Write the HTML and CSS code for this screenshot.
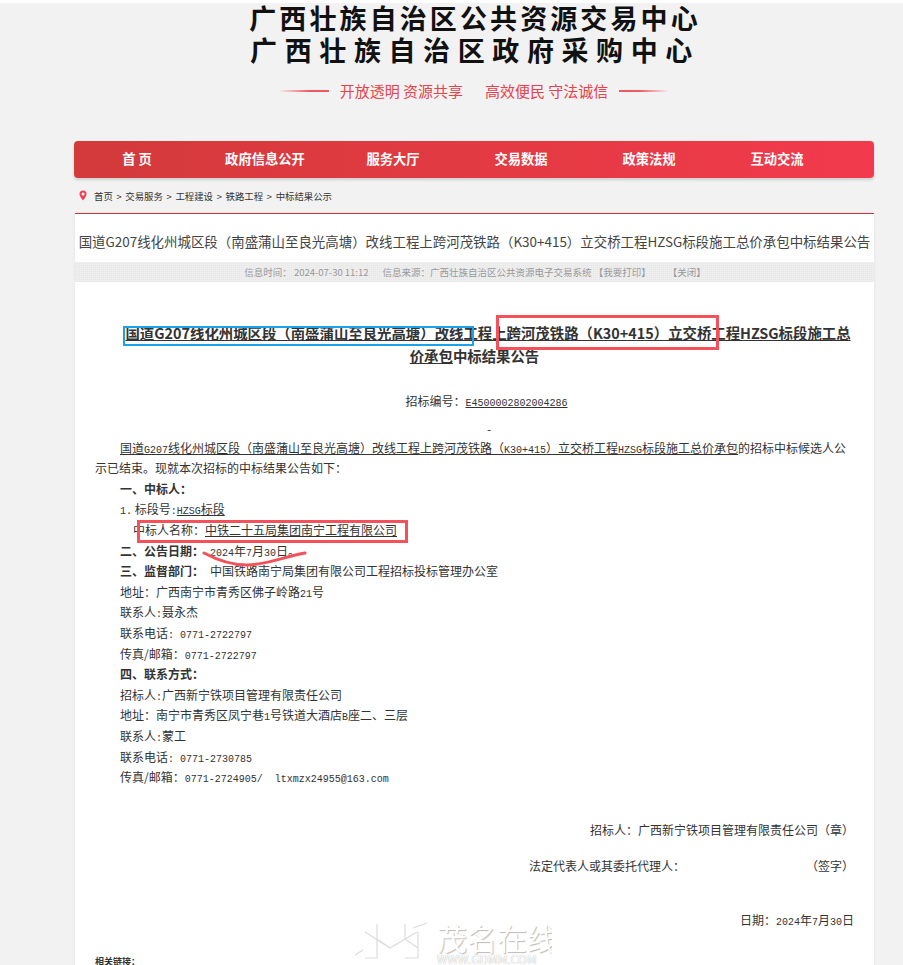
FILE: index.html
```html
<!DOCTYPE html>
<html lang="en">
<head>
    <meta charset="UTF-8">
    <meta name="viewport" content="width=device-width, initial-scale=1.0">
    <link rel="stylesheet" href="styles.css">
    <title>中标结果公示</title>
</head>
<body>
    <header class="site-header">
        <h1 class="site-title">广西壮族自治区公共资源交易中心</h1>
        <h1 class="site-title site-title-wide">广西壮族自治区政府采购中心</h1>
        <div class="slogan">
            <span class="slogan-line slogan-line-left"></span>
            <span>开放透明 资源共享</span>
            <span>高效便民 守法诚信</span>
            <span class="slogan-line slogan-line-right"></span>
        </div>
    </header>

    <nav class="main-nav">
        <a>首 页</a>
        <a>政府信息公开</a>
        <a>服务大厅</a>
        <a>交易数据</a>
        <a>政策法规</a>
        <a>互动交流</a>
    </nav>

    <div class="breadcrumb">
        <svg class="pin" width="8" height="11" viewBox="0 0 8 11">
            <path d="M4 0.5a3.5 3.5 0 0 0-3.5 3.5c0 2.4 3.5 6.5 3.5 6.5s3.5-4.1 3.5-6.5a3.5 3.5 0 0 0-3.5-3.5z" fill="#ee4050"/>
            <circle cx="4" cy="4" r="1.5" fill="#fff"/>
        </svg>
        <span>首页 &gt; 交易服务 &gt; 工程建设 &gt; 铁路工程 &gt; 中标结果公示</span>
    </div>

    <main class="panel">
        <h2 class="page-title">国道G207线化州城区段（南盛蒲山至良光高塘）改线工程上跨河茂铁路（K30+415）立交桥工程HZSG标段施工总价承包中标结果公告</h2>
        <div class="info-bar">
            <span>信息时间：&nbsp;2024-07-30 11:12</span>
            <span>信息来源：广西壮族自治区公共资源电子交易系统 【我要打印】</span>
            <span>【关闭】</span>
        </div>

        <article class="notice">
            <h3 class="notice-title"><u>国道G207线化州城区段（南盛蒲山至良光高塘）改线工程上跨河茂铁路（K30+415）立交桥工程HZSG标段施工总价承包</u>中标结果公告</h3>
            <p class="bid-no">招标编号：<u class="num">E4500002802004286</u></p>
            <p class="dash">-</p>
            <p class="lead"><u>国道<span class="num">G207</span>线化州城区段（南盛蒲山至良光高塘）改线工程上跨河茂铁路（<span class="num">K30+415</span>）立交桥工程<span class="num">HZSG</span>标段施工总价承包</u>的招标中标候选人公示已结束。现就本次招标的中标结果公告如下：</p>
            <p class="item"><b>一、中标人：</b></p>
            <p class="item"><span class="num">1.</span> 标段号<span class="num">:</span><u><span class="num">HZSG</span>标段</u></p>
            <p class="item item-name">中标人名称：<u>中铁二十五局集团南宁工程有限公司</u></p>
            <p class="item"><b>二、公告日期：</b><span class="num">2024</span>年<span class="num">7</span>月<span class="num">30</span>日。</p>
            <p class="item"><b>三、监督部门：</b>中国铁路南宁局集团有限公司工程招标投标管理办公室</p>
            <p class="item">地址：广西南宁市青秀区佛子岭路<span class="num">21</span>号</p>
            <p class="item">联系人<span class="num">:</span>聂永杰</p>
            <p class="item">联系电话<span class="num">: 0771-2722797</span></p>
            <p class="item">传真/邮箱：<span class="num">0771-2722797</span></p>
            <p class="item"><b>四、联系方式：</b></p>
            <p class="item">招标人<span class="num">:</span>广西新宁铁项目管理有限责任公司</p>
            <p class="item">地址：南宁市青秀区凤宁巷<span class="num">1</span>号铁道大酒店<span class="num">B</span>座二、三层</p>
            <p class="item">联系人<span class="num">:</span>蒙工</p>
            <p class="item">联系电话<span class="num">: 0771-2730785</span></p>
            <p class="item">传真/邮箱：<span class="num">0771-2724905/&nbsp;&nbsp;ltxmzx24955@163.com</span></p>

            <p class="sign sign-company">招标人：广西新宁铁项目管理有限责任公司（章）</p>
            <p class="sign sign-agent"><span>法定代表人或其委托代理人：</span><span>（签字）</span></p>
            <p class="sign sign-date">日期：<span class="num">2024</span>年<span class="num">7</span>月<span class="num">30</span>日</p>
            <p class="related">相关链接：</p>
        </article>
    </main>

    <!-- image watermark over the page -->
    <svg class="watermark-logo" width="78" height="50" viewBox="0 0 78 50">
        <path d="M22 9V43H10M50 9V24M63 17V43H50M10 17L35 33L62 17M22 24L35 33M50 24L63 33M58 13L72 8M0 40L8 35" fill="none" stroke="#dcdcdc" stroke-width="1.2"/>
    </svg>
    <div class="watermark-text">
        <span class="watermark-name">茂名在线</span>
        <span class="watermark-url">WWW.GDMM.COM</span>
    </div>

    <!-- hand marks drawn on the screenshot -->
    <div class="mark mark-blue"></div>
    <div class="mark mark-red mark-route"></div>
    <div class="mark mark-red mark-winner"></div>
    <svg class="mark-curve" width="110" height="20" viewBox="0 0 110 20">
        <path d="M3 5C18 13 32 17 46 17C66 17 85 8 104 5" fill="none" stroke="#f4515a" stroke-width="3" stroke-linecap="round"/>
    </svg>
</body>
</html>
```

FILE: styles.css
```css
html, body {
    height: 965px;
    overflow: hidden;
}

body {
    margin: 0;
    position: relative;
    background-color: #f2f2f2;
    border-top: 3px solid #fff;
    box-sizing: border-box;
    font-family: "Noto Sans CJK SC", "Liberation Sans", sans-serif;
    font-size: 12px;
    color: #333;
}

h1, h2, h3, p {
    margin: 0;
    font-weight: normal;
}

/* Header */
.site-header {
    height: 138px;
    text-align: center;
}

.site-title {
    height: 32px;
    margin-left: 47px;
    font-size: 27px;
    font-weight: 700;
    line-height: 30px;
    letter-spacing: 3.1px;
    color: #111;
}

.site-title-wide {
    letter-spacing: 7.6px;
}

.slogan {
    display: flex;
    justify-content: center;
    align-items: center;
    gap: 22px;
    margin-top: 14px;
    margin-left: 45px;
    font-size: 15px;
    line-height: 20px;
    color: #e8424c;
}

.slogan-line {
    width: 50px;
    height: 2px;
    margin: 0 -11px;
}

.slogan-line-left {
    background: linear-gradient(to right, rgba(239, 90, 98, 0), #ef5a62 60%);
}

.slogan-line-right {
    background: linear-gradient(to left, rgba(239, 90, 98, 0), #ef5a62 60%);
}

/* Navigation */
.main-nav {
    display: flex;
    width: 800px;
    height: 37px;
    margin-left: 74px;
    background: linear-gradient(to right, #d33a3a, #f23a4c);
    border-radius: 4px;
    box-shadow: 0 2px 3px rgba(0, 0, 0, 0.15);
}

.main-nav a {
    box-sizing: border-box;
    width: 128px;
    padding-right: 2px;
    font-size: 13.3px;
    font-weight: 700;
    line-height: 36px;
    text-align: center;
    color: #fff;
}

/* Breadcrumb */
.breadcrumb {
    display: flex;
    align-items: center;
    gap: 7px;
    height: 35px;
    padding-left: 79px;
    font-size: 9.4px;
    word-spacing: 1.6px;
    color: #333;
}

/* Panel */
.panel {
    width: 799px;
    height: 760px;
    margin-left: 75px;
    background-color: #fff;
    border-top: 1px solid #c9353b;
    box-shadow: 0 0 3px rgba(0, 0, 0, 0.08);
}

.page-title {
    height: 48px;
    font-size: 13.45px;
    line-height: 54px;
    text-align: center;
    white-space: nowrap;
    color: #444;
}

.info-bar {
    display: flex;
    justify-content: center;
    gap: 14px;
    height: 20px;
    padding-left: 1px;
    font-size: 9.5px;
    line-height: 21px;
    color: #999;
    background-color: #eee;
    background-image: linear-gradient(45deg, #e6e6e6 25%, transparent 25%, transparent 75%, #e6e6e6 75%);
    background-size: 2px 2px;
}

.info-bar span:last-child {
    margin-left: 3px;
}

/* Notice */
.notice {
    padding: 0 20px;
    line-height: 20.6px;
    color: #333;
}

.num {
    font-family: "Liberation Mono", monospace;
    font-size: 10px;
    line-height: 1;
}

.notice-title {
    margin-top: 39px;
    font-size: 14.4px;
    font-weight: 700;
    line-height: 23px;
    text-align: center;
    text-indent: 27px;
}

.bid-no {
    margin-top: 24px;
    text-align: center;
    text-indent: 24px;
}

.dash {
    margin-top: 7px;
    height: 19px;
    text-indent: 392px;
}

.lead {
    text-indent: 25px;
}

.item {
    padding-left: 25px;
}

.item b {
    margin-right: 6px;
}

.item-name {
    padding-left: 38px;
}

.sign {
    text-align: right;
}

.sign-company {
    margin-top: 32px;
}

.sign-agent {
    display: flex;
    justify-content: space-between;
    margin-top: 15.4px;
    margin-left: 434px;
}

.sign-date {
    margin-top: 34px;
}

.related {
    margin-top: 21px;
    font-size: 9px;
    font-weight: 700;
}

/* Watermark */
.watermark-logo {
    position: absolute;
    left: 355px;
    top: 912px;
}

.watermark-text {
    position: absolute;
    left: 437px;
    top: 919px;
    display: flex;
    flex-direction: column;
    width: 115px;
    overflow: hidden;
}

.watermark-name {
    font-size: 30px;
    line-height: 30px;
    white-space: nowrap;
    color: #fff;
    text-shadow: 1px 1px 1px #bbb;
}

.watermark-url {
    font-size: 12px;
    line-height: 14px;
    color: #fff;
    white-space: nowrap;
    text-shadow: 0 0 1px #999;
}

/* Annotation marks */
.mark {
    position: absolute;
    box-sizing: border-box;
}

.mark-blue {
    left: 123px;
    top: 323px;
    width: 351px;
    height: 20px;
    border: 2px solid #1aa3e8;
}

.mark-red {
    border: 3px solid #f4515a;
}

.mark-route {
    left: 496px;
    top: 312px;
    width: 223px;
    height: 35px;
}

.mark-winner {
    left: 137px;
    top: 517px;
    width: 271px;
    height: 23px;
}

.mark-curve {
    position: absolute;
    left: 201px;
    top: 545px;
}
```
